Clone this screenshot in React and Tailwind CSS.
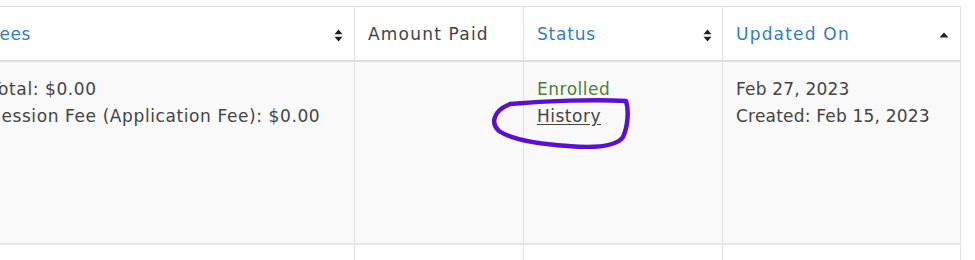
import React from "react"

const SortBoth = () => (
  <svg width="9" height="13" viewBox="0 0 9 13" className="shrink-0">
    <path d="M4.5 0.5 L8.5 5.3 L0.5 5.3 Z" fill="#222" />
    <path d="M4.5 12.5 L8.5 7.7 L0.5 7.7 Z" fill="#222" />
  </svg>
)

const SortUp = () => (
  <svg width="10" height="6" viewBox="0 0 10 6" className="shrink-0">
    <path d="M5 0.5 L9.5 5.5 L0.5 5.5 Z" fill="#222" />
  </svg>
)

const font = { fontFamily: '"DejaVu Sans", "Noto Sans", sans-serif' }

export default function App() {
  return (
    <div className="relative w-[975px] h-[260px] bg-white overflow-hidden" style={font}>
      <div className="mt-[6px] -ml-[24px] w-[985px] text-[17px] tracking-[0.2px] text-[#444]">
        {/* header */}
        <div className="flex h-[56px] border-t border-[#e2e2e2] border-b-2 border-b-[#dedede] bg-white">
          <div className="w-[379px] flex items-center justify-between pt-[3px] pl-[14px] pr-[11px] border-r border-[#e2e2e2]">
            <span className="text-[#2f7fc1] tracking-[0.6px]">Fees</span>
            <SortBoth />
          </div>
          <div className="w-[169px] flex items-center pt-[3px] pl-[13px] border-r border-[#e2e2e2]">
            <span className="tracking-[1.2px]">Amount Paid</span>
          </div>
          <div className="w-[199px] flex items-center justify-between pt-[3px] pl-[13px] pr-[10px] border-r border-[#e2e2e2]">
            <span className="text-[#2f7fc1] tracking-[0.8px]">Status</span>
            <SortBoth />
          </div>
          <div className="w-[238px] flex items-center justify-between pt-[3px] pl-[13px] pr-[11px] border-r border-[#e2e2e2]">
            <span className="text-[#2f7fc1] tracking-[1.2px]">Updated On</span>
            <SortUp />
          </div>
        </div>
        {/* body row */}
        <div className="flex h-[183px] border-b-2 border-b-[#e6e6e6] bg-[#f9f9f9] leading-[27px]">
          <div className="w-[379px] pl-[14px] pt-[14px] border-r border-[#e2e2e2] tracking-[0.6px]">
            <div>Total: $0.00</div>
            <div>Session Fee (Application Fee): $0.00</div>
          </div>
          <div className="w-[169px] border-r border-[#e2e2e2]" />
          <div className="w-[199px] pl-[13px] pt-[14px] border-r border-[#e2e2e2]">
            <div className="text-[#4d7d3c] tracking-[0.5px]">Enrolled</div>
            <div>
              <a href="#" className="underline underline-offset-2 text-[#444] tracking-[0.5px]">History</a>
            </div>
          </div>
          <div className="w-[238px] pl-[13px] pt-[14px] border-r border-[#e2e2e2]">
            <div>Feb 27, 2023</div>
            <div>Created: Feb 15, 2023</div>
          </div>
        </div>
        <div className="flex h-[20px] bg-white">
          <div className="w-[379px] border-r border-[#e2e2e2]" />
          <div className="w-[169px] border-r border-[#e2e2e2]" />
          <div className="w-[199px] border-r border-[#e2e2e2]" />
          <div className="w-[238px] border-r border-[#e2e2e2]" />
        </div>
      </div>
      <svg className="absolute left-0 top-0 pointer-events-none" width="975" height="260">
        <path
          d="M510 104 C545 101 595 99 626 101 C629 110 628 126 623 137 C616 147 592 148 568 146 C540 144 512 140 499 131 C490 123 494 111 508 105"
          fill="none"
          stroke="#5a0fd2"
          strokeWidth="4.5"
          strokeLinecap="round"
          strokeLinejoin="round"
        />
      </svg>
    </div>
  )
}
